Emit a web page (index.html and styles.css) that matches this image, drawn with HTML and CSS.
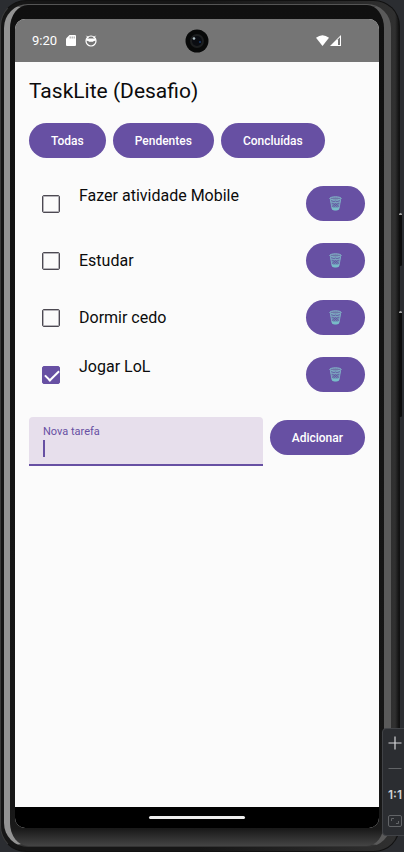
FILE: index.html
```html
<!DOCTYPE html>
<html lang="pt-BR">
<head>
<meta charset="utf-8">
<meta name="viewport" content="width=device-width, initial-scale=1">
<title>TaskLite</title>
<link rel="stylesheet" href="styles.css">
</head>
<body>
<svg class="defs" aria-hidden="true">
  <symbol id="trash" viewBox="0 0 12 14">
    <path d="M1 2.500 2.700 12c.2 1.800 6.400 1.800 6.600 0L11 2.500z" fill="#6e8fb5"/>
    <path d="M1.500 5l7 6M1.300 3l8 7M4.500 3l5.500 4.500M10.500 5l-7 6M10.700 3l-8 7M7.500 3L2 7.500" stroke="#6450a0" stroke-width=".7" fill="none"/>
    <path d="M2.500 10.300c2 .8 5 .8 7 0L9.200 12.500c-1 1.400-5.400 1.400-6.400 0z" fill="#78bcc8"/>
    <ellipse cx="6" cy="2.300" rx="5.300" ry="1.500" fill="#6d78a8" stroke="#86c0cc" stroke-width=".9"/>
    <path d="M1.200 3.500 2.800 12M10.800 3.500 9.200 12M1.500 5.500c2 1 7 1 9 0" stroke="#83b9c8" stroke-width=".7" fill="none"/>
  </symbol>
</svg>
<div class="desk">
  <div class="device">
    <div class="rim">
      <div class="screen">
        <header class="status">
          <span class="clock">9:20</span>
          <svg class="sd" viewBox="0 0 10 11" aria-hidden="true"><path d="M3.500 0H9q1 0 1 1v9q0 1-1 1H1q-1 0-1-1V3.500z" fill="#fff"/><path d="M4.200 1.500v2M6.200 1.500v2M8.200 1.500v2" stroke="#757575" stroke-width=".7"/></svg>
          <svg class="face" viewBox="0 0 12 12" aria-hidden="true"><circle cx="6" cy="6" r="5" fill="none" stroke="#fff" stroke-width="1.200"/><path d="M1.500 3.500h9v2.700L9 5.800l-1 .9H4l-1-.9-1.500.4z" fill="#fff"/><path d="M1.500 .8 3.500 3M10.500 .8 8.500 3" stroke="#fff"/></svg>
          <span class="signals">
            <svg class="wifi" viewBox="0 0 13 11" aria-hidden="true"><path d="M0 2.700Q6.500-2.400 13 2.700L6.500 11z" fill="#fff"/></svg>
            <svg class="cell" viewBox="0 0 11 11" aria-hidden="true"><path d="M11 0v11H0z" fill="#fff"/><path d="M8 4.300 10 2.300V10H8z" fill="#757575"/></svg>
          </span>
          <svg class="camera" viewBox="0 0 24 24" aria-hidden="true"><circle cx="12" cy="12" r="11.500" fill="#080909"/><circle cx="12" cy="12" r="7" fill="#1d1f20"/><circle cx="12" cy="12" r="5" fill="#0b0d12"/><circle cx="9" cy="9.500" r="1.300" fill="#b5c5c9"/><circle cx="15" cy="13" r=".8" fill="#275ca6"/></svg>
        </header>
        <main class="app">
          <h1>TaskLite (Desafio)</h1>
          <nav class="filters" aria-label="Filtros">
            <button class="btn" type="button">Todas</button>
            <button class="btn" type="button">Pendentes</button>
            <button class="btn" type="button">Concluídas</button>
          </nav>
          <ul class="tasks">
            <li><input type="checkbox" id="t1"><label class="tall" for="t1">Fazer atividade Mobile</label><button class="btn del" type="button" aria-label="Excluir"><svg><use href="#trash"/></svg></button></li>
            <li><input type="checkbox" id="t2"><label for="t2">Estudar</label><button class="btn del" type="button" aria-label="Excluir"><svg><use href="#trash"/></svg></button></li>
            <li><input type="checkbox" id="t3"><label for="t3">Dormir cedo</label><button class="btn del" type="button" aria-label="Excluir"><svg><use href="#trash"/></svg></button></li>
            <li><input type="checkbox" id="t4" checked><label class="tall" for="t4">Jogar LoL</label><button class="btn del" type="button" aria-label="Excluir"><svg><use href="#trash"/></svg></button></li>
          </ul>
          <form class="add">
            <div class="field">
              <label for="new">Nova tarefa</label>
              <input type="text" id="new">
              <span class="caret"></span>
            </div>
            <button class="btn" type="button">Adicionar</button>
          </form>
        </main>
        <footer class="home"><span></span></footer>
      </div>
    </div>
  </div>
  <span class="key power"></span>
  <span class="key volume"></span>
  <div class="zoom">
    <button type="button" aria-label="Aumentar"><svg viewBox="0 0 14 14"><path d="M7 .5v13M.5 7h13" stroke="#d5d6d9" stroke-width="1.200"/></svg></button>
    <button type="button" aria-label="Diminuir"><svg viewBox="0 0 14 14"><path d="M.5 6.500h13" stroke="#626467"/></svg></button>
    <button type="button">1:1</button>
    <button type="button" aria-label="Ajustar"><svg viewBox="0 0 14 14"><rect x=".5" y="1.500" width="13" height="11" rx="1.500" fill="none" stroke="#626467"/><path d="M3.500 7V4.500H6M10.500 7v2.500H8" fill="none" stroke="#626467"/></svg></button>
  </div>
</div>
</body>
</html>
```
FILE: styles.css
```css
* { box-sizing: border-box; }

body {
  margin: 0;
  background: #2b2d31;
  font-family: Roboto, "Liberation Sans", sans-serif;
  color: #0b0b0c;
}

.defs { position: absolute; width: 0; height: 0; }

.desk {
  position: relative;
  min-height: 100vh;
  display: flex;
  padding-right: 4px;
  overflow: hidden;
}

.device {
  flex: 1;
  display: flex;
  padding: 3px 8px 4px 3px;
  border: 1px solid #111;
  border-left-color: #3b3b3b;
  border-radius: 26px;
  background: linear-gradient(90deg, #161616 0 50%, #303030 99%, #111);
}

.rim {
  flex: 1;
  display: flex;
  padding: 14px 5px 18px;
  border-style: solid;
  border-width: 1px 7px 1px 6px;
  border-color: #555 #5a5a5a #333 #939393;
  border-radius: 24px;
  background: linear-gradient(#101010, #171717 95%, #1a1a1a 98%, #444);
}

.screen {
  flex: 1;
  display: flex;
  flex-direction: column;
  overflow: hidden;
  border-radius: 10px;
  background: #fbfbfb;
}

.status {
  position: relative;
  display: flex;
  align-items: center;
  height: 43px;
  padding: 0 38px 0 17px;
  background: #757575;
  color: #fff;
}

.clock { font-size: 13px; line-height: 16px; }
.sd { width: 10px; height: 11px; margin-left: 9px; }
.face { width: 12px; height: 12px; margin-left: 9px; }
.signals { display: flex; gap: 1px; margin-left: auto; }
.wifi { width: 13px; height: 11px; }
.cell { width: 11px; height: 11px; }

.camera {
  position: absolute;
  top: 10px;
  left: 50%;
  width: 24px;
  height: 24px;
  margin-left: -12px;
}

.app { flex: 1; padding: 14px; }

h1 {
  margin: 0 0 16px;
  font-size: 21px;
  line-height: 31px;
  font-weight: 400;
}

.filters { display: flex; gap: 7px; }

.btn {
  height: 35px;
  padding: 0 22px;
  border: 0;
  border-radius: 18px;
  background: #6750a3;
  color: #fff;
  font: 500 12px/18px Roboto, "Liberation Sans", sans-serif;
}

.tasks { list-style: none; margin: 17px 0 14px; padding: 0; }

.tasks li { display: flex; align-items: center; height: 57px; }

.tasks input {
  appearance: none;
  width: 18px;
  height: 18px;
  margin: 0 19px 0 13px;
  border: 1px solid #4c4952;
  border-radius: 2px;
  box-shadow: inset 0 0 0 1px #b5b3b8;
}

.tasks input:checked {
  border-color: #6750a3;
  background: #6750a3;
  box-shadow: none;
}

.tasks input:checked::before {
  content: "";
  display: block;
  width: 12px;
  height: 6px;
  margin: 3px 2px;
  border: solid #fff;
  border-width: 0 0 2px 2px;
  transform: rotate(-45deg);
}

.tasks label { flex: 1; font-size: 16px; line-height: 18px; }
.tasks .tall { min-height: 34px; }

.del { display: grid; place-items: center; width: 59px; padding: 0; }
.del svg { width: 13px; height: 15px; }

.add { display: flex; align-items: flex-start; gap: 7px; }
.add .btn { margin-top: 3px; }

.field {
  position: relative;
  flex: 1;
  min-width: 0;
  height: 49px;
  padding: 7px 14px 0;
  border-bottom: 2px solid #6750a3;
  border-radius: 4px 4px 0 0;
  background: #e7dfec;
}

.field label {
  display: block;
  font-size: 11px;
  line-height: 16px;
  color: #6750a3;
}

.field input {
  display: block;
  width: 100%;
  height: 18px;
  padding: 0;
  border: 0;
  outline: 0;
  background: none;
  font: 16px/18px Roboto, "Liberation Sans", sans-serif;
}

.caret {
  position: absolute;
  left: 14px;
  top: 23px;
  width: 2px;
  height: 17px;
  background: #6750a3;
}

.home {
  display: grid;
  place-items: center;
  height: 21px;
  background: #000;
}

.home span { width: 96px; height: 3px; border-radius: 2px; background: #eee; }

.key {
  position: absolute;
  right: 2px;
  width: 3px;
  border-top: 2px solid #aaa;
  border-radius: 2px;
  background: #0d0d0d;
}

.power { top: 213px; height: 53px; }
.volume { top: 311px; height: 106px; }

.zoom {
  position: absolute;
  right: -4px;
  bottom: 16px;
  width: 26px;
  padding: 1px 0;
  border: 1px solid #414347;
  border-radius: 4px;
  background: #2b2d31;
}

.zoom button {
  display: grid;
  place-items: center;
  width: 24px;
  height: 26px;
  padding: 0;
  border: 0;
  background: none;
  color: #d0d1d4;
  font: 600 12px/16px Inter, "Liberation Sans", sans-serif;
}

.zoom svg { width: 14px; height: 14px; }
```
